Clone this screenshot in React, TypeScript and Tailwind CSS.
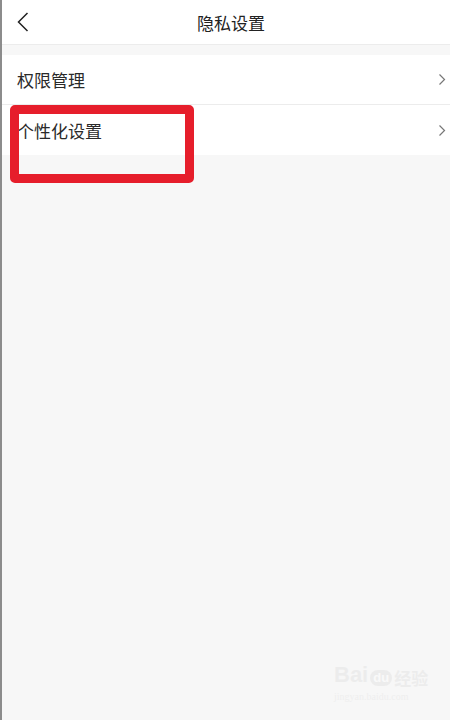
import React from "react";

const font = { fontFamily: '"Noto Sans CJK SC", "Noto Sans", sans-serif' };

const Chevron = () => (
  <svg width="8" height="13" viewBox="0 0 8 13" fill="none">
    <path d="M1.5 1.5 L6.5 6.5 L1.5 11.5" stroke="#777" strokeWidth="1.2" />
  </svg>
);

const Row = ({ label, last }: { label: string; last?: boolean }) => (
  <div
    className={`flex items-center justify-between h-[50px] pl-[15px] pr-[4px] bg-white ${
      last ? "" : "border-b border-[#ececec]"
    }`}
  >
    <span className="text-[17px] text-[#2a2a2a] leading-none">{label}</span>
    <Chevron />
  </div>
);

export default function App() {
  return (
    <div className="relative flex w-[450px] h-[720px] bg-[#f7f7f7] overflow-hidden" style={font}>
      {/* left edge */}
      <div className="w-[2px] shrink-0 bg-[#8c8c8c]" />

      <div className="flex-1 flex flex-col">
        {/* Header */}
        <div className="relative flex items-center h-[45px] bg-white border-b border-[#ececec]">
          <svg className="ml-[14px]" width="14" height="22" viewBox="0 0 14 22" fill="none">
            <path d="M11.5 2 L2.5 11 L11.5 20" stroke="#222" strokeWidth="1.5" />
          </svg>
          <span className="absolute left-[195px] text-[17px] text-[#222] leading-none">隐私设置</span>
        </div>

        <div className="h-[10px]" />

        {/* List */}
        <div className="flex flex-col">
          <Row label="权限管理" />
          <Row label="个性化设置" last />
        </div>
      </div>

      {/* red highlight */}
      <div className="absolute left-[10px] top-[105px] w-[184px] h-[78px] border-[9px] border-[#e61e2b] rounded-[5px]" />

      {/* watermark */}
      <div className="absolute left-[334px] top-[664px] flex flex-col items-start opacity-30">
        <div className="flex items-end gap-[2px]">
          <span className="text-[22px] font-bold text-[#d6d6d6] leading-none" style={{ fontFamily: '"Liberation Sans", sans-serif' }}>
            Bai
          </span>
          <span className="text-[13px] font-bold text-white bg-[#d6d6d6] rounded-full px-[3px] leading-[16px]" style={{ fontFamily: '"Liberation Sans", sans-serif' }}>
            du
          </span>
          <span className="text-[17px] font-bold text-[#d6d6d6] leading-none">经验</span>
        </div>
        <span className="text-[10px] text-[#dcdcdc] mt-[3px]" style={{ fontFamily: '"Liberation Serif", serif' }}>
          jingyan.baidu.com
        </span>
      </div>
    </div>
  );
}
